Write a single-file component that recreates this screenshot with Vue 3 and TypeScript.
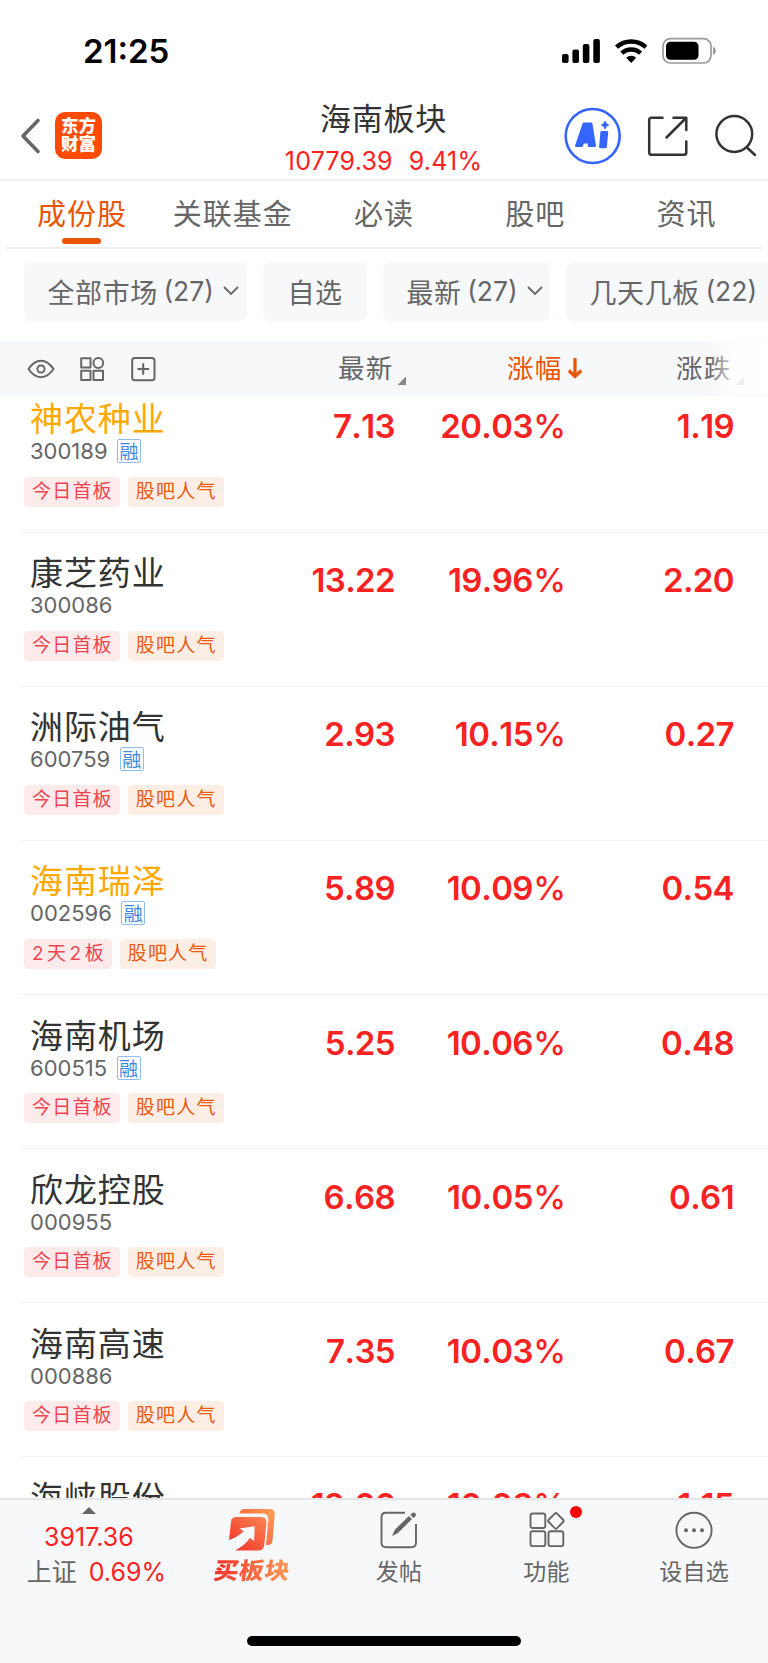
<script setup lang="ts">
interface Tag {
  text: string
  kind: string
}

interface Stock {
  name: string
  code: string
  margin?: boolean
  highlight?: boolean
  price: string
  pct: string
  change: string
  board: string
}

const tabs: string[] = ['成份股', '关联基金', '必读', '股吧', '资讯']

const stocks: Stock[] = [
  { name: '神农种业', code: '300189', margin: true, highlight: true, price: '7.13', pct: '20.03', change: '1.19', board: '今日首板' },
  { name: '康芝药业', code: '300086', price: '13.22', pct: '19.96', change: '2.20', board: '今日首板' },
  { name: '洲际油气', code: '600759', margin: true, price: '2.93', pct: '10.15', change: '0.27', board: '今日首板' },
  { name: '海南瑞泽', code: '002596', margin: true, highlight: true, price: '5.89', pct: '10.09', change: '0.54', board: '2天2板' },
  { name: '海南机场', code: '600515', margin: true, price: '5.25', pct: '10.06', change: '0.48', board: '今日首板' },
  { name: '欣龙控股', code: '000955', price: '6.68', pct: '10.05', change: '0.61', board: '今日首板' },
  { name: '海南高速', code: '000886', price: '7.35', pct: '10.03', change: '0.67', board: '今日首板' },
  { name: '海峡股份', code: '002320', price: '12.66', pct: '10.03', change: '1.15', board: '今日首板' },
]

const tagsOf = (s: Stock): Tag[] => [
  { text: s.board, kind: /\d/.test(s.board) ? 'board streak' : 'board' },
  { text: '股吧人气', kind: 'hot' },
]
</script>

<template>
  <div class="screen">
    <div class="status">
      <span class="clock">21:25</span>
      <svg class="status-icons" width="156" height="28" viewBox="0 0 156 28">
        <rect x="1" y="17" width="6.6" height="9" rx="2" />
        <rect x="11.4" y="12.5" width="6.6" height="13.5" rx="2" />
        <rect x="21.8" y="7" width="6.6" height="19" rx="2" />
        <rect x="32.3" y="2" width="6.6" height="24" rx="2" />
        <g fill="none" stroke="#000" stroke-width="4.4">
          <path d="M55.5 10.2a21.6 21.6 0 0 1 29.4 0" />
          <path d="M60.8 16.2a13.6 13.6 0 0 1 18.8 0" />
        </g>
        <path d="M65.2 20.8a7.2 7.2 0 0 1 10 0L70.2 26z" />
        <rect x="102" y="1.6" width="48" height="24.4" rx="7.5" fill="none" stroke="#9b9b9b" stroke-width="1.7" />
        <rect x="105" y="4.8" width="32.5" height="18" rx="4.5" />
        <path d="M152.2 9.8c3.2 1.2 3.2 7 0 8.2z" fill="#8c8c8c" />
      </svg>
    </div>

    <header class="header">
      <div class="header-left">
        <svg width="22" height="38" viewBox="0 0 22 38">
          <path d="M19 3.500 4 19l15 15.500" fill="none" stroke="#666" stroke-width="3.600" stroke-linecap="round" stroke-linejoin="round" />
        </svg>
        <div class="logo"><span>东方</span><span>财富</span></div>
      </div>
      <div class="heading">
        <div class="title">海南板块</div>
        <div class="quote"><span>10779.39</span><span>9.41%</span></div>
      </div>
      <svg class="header-icons" width="204" height="60" viewBox="0 0 204 60">
        <circle cx="28.700" cy="30" r="27" fill="none" stroke="#3565ff" stroke-width="2.600" />
        <g fill="#3565ff" stroke="#3565ff" stroke-width="2.400" stroke-linejoin="round">
          <path fill-rule="evenodd" d="M12.200 39.800 19.800 17.600h7.400l3.600 22.200h-5.800l-.4-3.500h-5.600l-1.300 3.500zM20.800 31.500h3l-.6-5z" />
          <path d="M37.600 26.300h5.400l-1.300 14.700h-5.400z" />
        </g>
        <path d="M41 15.200q.9 3 3.600 3.800-2.700.8-3.600 3.800-.9-3-3.600-3.800 2.700-.8 3.600-3.800z" fill="#3565ff" stroke="#3565ff" />
        <g fill="none" stroke="#333" stroke-width="2.500" stroke-linecap="round" stroke-linejoin="round">
          <path d="M98.500 11.700H87.500q-2.300 0-2.300 2.300v32.500q0 2.300 2.300 2.300H120q2.300 0 2.300-2.300V35.500M109.500 11.700h12.800V24M121.500 12.500 102.500 31.500" />
          <circle cx="170.300" cy="28" r="17.900" />
          <path d="m183 41.500 8 7.500" />
        </g>
      </svg>
    </header>

    <nav class="tabs">
      <div v-for="(t, i) in tabs" :key="t" class="tab" :class="{ active: i === 0 }">
        <span>{{ t }}</span>
      </div>
    </nav>

    <div class="chips">
      <div class="chip market">
        全部市场<b>(27)</b>
        <svg width="16" height="10" viewBox="0 0 16 10"><path d="m1 1 7 7 7-7" /></svg>
      </div>
      <div class="chip own">自选</div>
      <div class="chip latest">
        最新<b>(27)</b>
        <svg width="16" height="10" viewBox="0 0 16 10"><path d="m1 1 7 7 7-7" /></svg>
      </div>
      <div class="chip boards">几天几板<b>(22)</b></div>
    </div>

    <div class="thead">
      <svg class="tools" width="132" height="28" viewBox="0 0 132 28">
        <g fill="none" stroke="#666" stroke-width="2" stroke-linejoin="round">
          <path d="M1.500 14Q7 5.800 14 5.800T26.500 14Q21 22.200 14 22.200T1.500 14z" />
          <circle cx="14" cy="14" r="3.600" />
          <rect x="54.200" y="3.200" width="9.300" height="9.300" />
          <circle cx="71.300" cy="8" r="4.900" />
          <rect x="54.200" y="15.700" width="9.300" height="9.300" />
          <rect x="66.500" y="15.700" width="9.500" height="9.300" />
          <rect x="105.200" y="3" width="22.300" height="22.200" rx="2.500" />
          <path d="M110.500 14h11.500M116.200 8.300v11.500" />
        </g>
      </svg>
      <div class="th th-price"><span>最新</span><i class="corner" /></div>
      <div class="th th-pct">
        <span>涨幅</span>
        <svg width="16" height="22" viewBox="0 0 16 22">
          <path d="M8 1v18M1.800 13.500 8 19.600l6.200-6.100" fill="none" stroke="#ea5504" stroke-width="3.200" />
        </svg>
      </div>
      <div class="th th-change"><span>涨跌</span><i class="corner" /></div>
      <div class="fade" />
    </div>

    <main class="list">
      <div v-for="s in stocks" :key="s.code" class="row">
        <div class="info">
          <div class="name" :class="{ highlight: s.highlight }">{{ s.name }}</div>
          <div class="code">
            <span>{{ s.code }}</span>
            <em v-if="s.margin">融</em>
          </div>
          <div class="tags">
            <span v-for="t in tagsOf(s)" :key="t.text" class="tag" :class="t.kind">{{ t.text }}</span>
          </div>
        </div>
        <div class="num price">{{ s.price }}</div>
        <div class="num pct">{{ s.pct }}<small>%</small></div>
        <div class="num change">{{ s.change }}</div>
      </div>
    </main>

    <footer class="footer">
      <div class="bar">
        <div class="index">
          <i class="up" />
          <div class="index-value">3917.36</div>
          <div class="index-line"><span>上证</span><b>0.69%</b></div>
        </div>
        <div class="item buy">
          <svg width="50" height="44" viewBox="0 0 50 44">
            <defs>
              <linearGradient id="front" x1="0" y1="1" x2="1" y2="0">
                <stop offset="0" stop-color="#f03028" />
                <stop offset="1" stop-color="#fb8752" />
              </linearGradient>
              <linearGradient id="back" x1="0" y1="0" x2="1" y2="1">
                <stop offset="0" stop-color="#f66d3d" />
                <stop offset=".5" stop-color="#ff9b55" />
                <stop offset="1" stop-color="#f86b42" />
              </linearGradient>
            </defs>
            <path d="M12.500 5.500Q13.200 1 17.500 1h25q5.600 0 5.200 5.500l-2.200 26Q45 37 40.500 37H39l2.300-25Q41.500 5.500 36 5.500z" fill="url(#back)" />
            <path d="M9.500 9H34q6 0 5.500 6L37.300 37q-.6 5.500-6 5.500H8q10.500-5.500 14.800-12.500l4.300 3 .6-14.700-15.200 2.200 4.300 2.700Q10 29.500 2 32L4 14Q4.500 9 9.500 9z" fill="url(#front)" />
          </svg>
          <span>买板块</span>
        </div>
        <div class="item post">
          <svg width="38" height="38" viewBox="0 0 38 38">
            <path d="M25 1.800H6Q1.500 1.800 1.500 6.300v25.400q0 4.500 4.500 4.500h25.500q4.500 0 4.500-4.500V13" fill="none" stroke="#666" stroke-width="1.900" />
            <path d="m12 25 3-6.500L29 5l3 3-14 14zM30.300 3.800l2-1.800q1.800-1 3 .3 1.200 1.500.1 2.900l-2 1.800z" fill="#666" />
          </svg>
          <span>发帖</span>
        </div>
        <div class="item func">
          <svg width="38" height="38" viewBox="0 0 38 38" fill="none" stroke="#666" stroke-width="1.900">
            <rect x="2.500" y="2.500" width="14.800" height="14.500" rx="2.200" />
            <rect x="2.500" y="20.300" width="14.800" height="14.800" rx="2.200" />
            <rect x="20.500" y="20.300" width="14.800" height="14.800" rx="2.200" />
            <rect x="22" y="4" width="11.800" height="11.800" rx="1.600" transform="rotate(45 27.900 9.900)" />
          </svg>
          <i class="dot" />
          <span>功能</span>
        </div>
        <div class="item more">
          <svg width="38" height="38" viewBox="0 0 38 38">
            <circle cx="19" cy="19.300" r="17.600" fill="none" stroke="#666" stroke-width="1.900" />
            <g fill="#666"><circle cx="11" cy="19.300" r="2" /><circle cx="19" cy="19.300" r="2" /><circle cx="27" cy="19.300" r="2" /></g>
          </svg>
          <span>设自选</span>
        </div>
      </div>
      <div class="home" />
    </footer>
  </div>
</template>

<style>
html,
body {
  margin: 0;
  background: #fff;
}
</style>

<style scoped>
.screen {
  width: 768px;
  height: 1663px;
  display: flex;
  flex-direction: column;
  overflow: hidden;
  background: #fff;
  color: #666;
  font-family: Inter, "Noto Sans CJK SC", sans-serif;
  font-weight: 400;
  white-space: nowrap;
}
.screen * {
  box-sizing: border-box;
}
svg {
  display: block;
  flex: none;
}
.status {
  height: 92px;
  flex: none;
  display: flex;
  justify-content: space-between;
  padding: 37px 51px 0 83px;
}
.clock {
  font-size: 33px;
  line-height: 29px;
  font-weight: 600;
  color: #000;
}
.header {
  height: 89px;
  flex: none;
  display: grid;
  grid-template-columns: 280px 204px 1fr;
  border-bottom: 2px solid #efefef;
}
.header-left {
  display: flex;
  align-items: center;
  gap: 14px;
  padding: 0 0 0 19px;
}
.logo {
  width: 47px;
  height: 47px;
  border-radius: 10px;
  background: #ff4a04;
  color: #fff;
  display: flex;
  flex-direction: column;
  align-items: center;
  justify-content: center;
  padding-bottom: 1px;
  font-size: 17.500px;
  line-height: 18.500px;
  font-weight: 900;
}
.heading {
  display: flex;
  flex-direction: column;
  align-items: center;
  padding-left: 3px;
}
.title {
  margin-top: 9px;
  font-size: 31px;
  line-height: 36px;
  letter-spacing: 0.800px;
  color: #333;
}
.quote {
  display: flex;
  gap: 16px;
  margin-top: 9px;
  font-size: 25px;
  line-height: 30px;
  letter-spacing: 0.200px;
  color: #ff2020;
}
.header-icons {
  margin: 14px 0 0 80px;
}
.tabs {
  height: 68px;
  flex: none;
  margin: 0 6px;
  display: grid;
  grid-template-columns: repeat(5, 1fr);
  border-bottom: 2px solid #eee;
}
.tab {
  display: flex;
  flex-direction: column;
  align-items: center;
  padding-top: 16px;
  font-size: 29px;
  line-height: 36px;
  letter-spacing: 1px;
}
.active {
  color: #ea5504;
}
.active span {
  padding-left: 1px;
}
.active::after {
  content: "";
  width: 39px;
  height: 6px;
  margin-top: 5px;
  border-radius: 3px;
  background: #ea5504;
}
.chips {
  height: 92px;
  flex: none;
  display: flex;
  gap: 16px;
  padding: 13px 0 0 24px;
}
.chip {
  height: 59px;
  flex: none;
  display: flex;
  align-items: center;
  border-radius: 8px;
  background: #f7f8fa;
  padding: 0 0 1px 23.500px;
  font-size: 27px;
  letter-spacing: 0.600px;
}
.chip b {
  margin-left: 5.500px;
  font-weight: 400;
  font-size: 26.500px;
  letter-spacing: 0;
}
.chip svg {
  margin-left: 9px;
  fill: none;
  stroke: #666;
  stroke-width: 1.800;
}
.market {
  width: 223px;
}
.own {
  width: 104px;
  padding-left: 24.500px;
}
.latest {
  width: 167px;
}
.boards {
  width: 226px;
}
.thead {
  position: relative;
  height: 55px;
  flex: none;
  display: flex;
  align-items: center;
  background: #f7f8fa;
}
.tools {
  margin-left: 27px;
}
.th {
  display: flex;
  align-items: center;
  font-size: 26.500px;
  letter-spacing: 1.300px;
}
.th span {
  margin-top: -4px;
}
.th-price {
  width: 169px;
  margin-left: 179px;
}
.th-pct {
  width: 169px;
  color: #ea5504;
}
.th-pct svg {
  margin: -2px 0 0 4px;
}
.corner {
  margin: 25px 0 0 4px;
  width: 8px;
  height: 8px;
  background: linear-gradient(135deg, transparent 50%, #888 50%);
}
.fade {
  position: absolute;
  right: 0;
  top: 1px;
  width: 60px;
  height: 53px;
  background: linear-gradient(90deg, rgba(255, 255, 255, 0), rgba(255, 255, 255, 0.850) 50%, rgba(255, 255, 255, 0.950));
}
.list {
  flex: 1 1 0;
  min-height: 0;
  overflow: hidden;
}
.row {
  height: 154.150px;
  margin-left: 20px;
  display: flex;
  border-bottom: 1px solid #f1f1f1;
}
.row:first-child {
  margin-top: -17.500px;
}
.info {
  width: 255px;
  padding-top: 22.500px;
}
.name {
  margin-left: 10px;
  font-size: 33px;
  line-height: 36px;
  letter-spacing: 0.900px;
  color: #333;
}
.name.highlight {
  color: #ffa800;
}
.code {
  display: flex;
  align-items: center;
  height: 26px;
  margin: 1px 0 0 10px;
  font-size: 22px;
}
.code em {
  width: 24px;
  height: 24px;
  margin-left: 9.500px;
  border: 1.500px solid #8fbdf2;
  border-radius: 2px;
  color: #3c87e0;
  font-size: 19px;
  line-height: 21px;
  font-family: "Noto Sans CJK SC", sans-serif;
  font-style: normal;
  text-align: center;
}
.tags {
  display: flex;
  gap: 8px;
  margin: 12.500px 0 0 4px;
}
.tag {
  height: 30px;
  padding: 0 7px 0 8px;
  border-radius: 4px;
  font-size: 19px;
  line-height: 30px;
  letter-spacing: 1.200px;
}
.tag.streak {
  padding-right: 4.500px;
  letter-spacing: 3.500px;
}
.board {
  background: #fdebec;
  color: #ee4650;
}
.hot {
  background: #fdeee5;
  color: #ea5b10;
}
.num {
  padding-top: 28.500px;
  font-size: 33px;
  line-height: 38px;
  font-weight: 600;
  font-kerning: none;
  letter-spacing: -0.600px;
  text-align: right;
  color: #f82222;
}
.num small {
  margin-left: 0.500px;
  font-size: 33px;
  font-weight: 500;
}
.price {
  width: 120px;
}
.pct {
  width: 170.500px;
}
.change {
  width: 168.500px;
}
.footer {
  height: 165px;
  flex: none;
  border-top: 2px solid #e4e5e7;
  background: #f7f8fa;
  display: flex;
  flex-direction: column;
  align-items: center;
}
.bar {
  width: 768px;
  height: 136px;
  display: flex;
}
.index {
  width: 178px;
  display: flex;
  flex-direction: column;
  align-items: center;
  padding-top: 7px;
  color: #ff2020;
  font-size: 25px;
  line-height: 30px;
}
.up {
  border: solid transparent;
  border-width: 0 7px 7px;
  border-bottom-color: #666;
}
.index-value {
  margin-top: 8px;
}
.index-line {
  display: flex;
  gap: 12px;
  margin: 5px 0 0 15px;
}
.index-line span {
  color: #666;
}
.index-line b {
  font-weight: 400;
}
.item {
  position: relative;
  width: 147.800px;
  display: flex;
  flex-direction: column;
  align-items: center;
  padding-top: 11px;
  font-size: 23px;
  line-height: 30px;
  letter-spacing: 0.300px;
}
.item span {
  margin-top: 8px;
}
.item.buy {
  padding-top: 8px;
}
.item.buy span {
  margin-top: 4px;
  padding: 0 1px;
  font-size: 25px;
  font-weight: 900;
  line-height: 30px;
  transform: skewX(-8deg) scaleY(0.930);
  background: linear-gradient(90deg, #f03028, #ff9b55);
  background-clip: text;
  color: transparent;
}
.dot {
  position: absolute;
  left: 97px;
  top: 6px;
  width: 12px;
  height: 12px;
  border-radius: 50%;
  background: #f00;
}
.home {
  width: 274px;
  height: 10px;
  border-radius: 5px;
  background: #000;
}
</style>
